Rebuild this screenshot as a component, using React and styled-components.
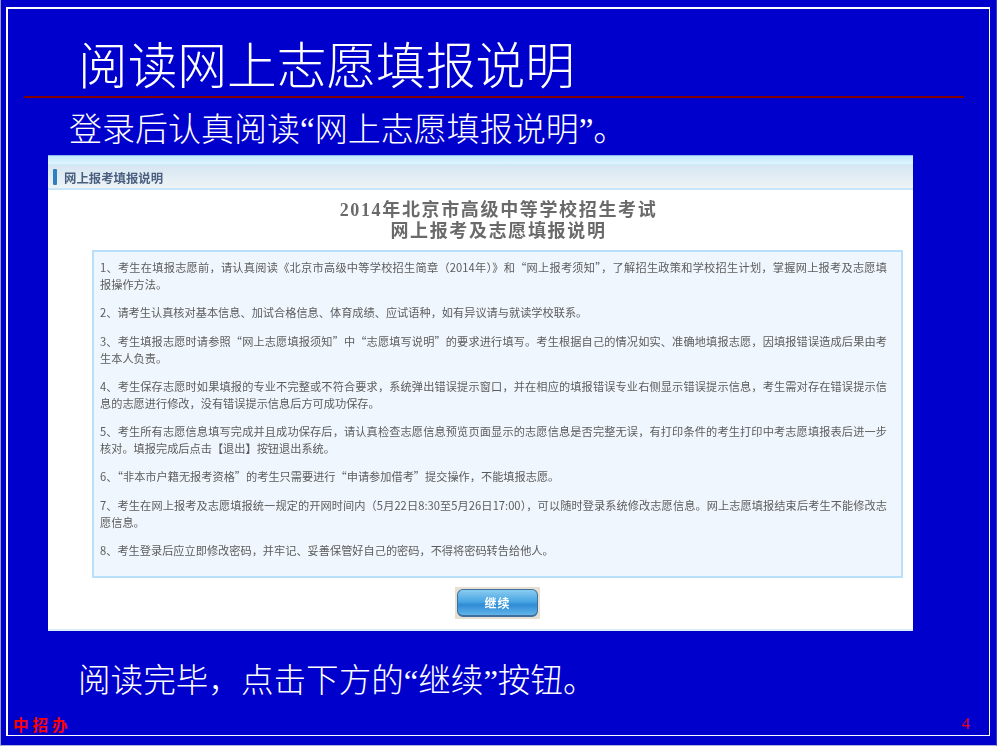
import React from "react";
import styled, { createGlobalStyle } from "styled-components";

const Global = createGlobalStyle`
  html, body { margin: 0; padding: 0; background: #0000cc; }
`;
const slideFont = `"Liberation Serif", "Noto Sans CJK SC", serif`;
const bodyFont = `"Noto Sans CJK SC", "Liberation Sans", sans-serif`;

const Slide = styled.div`
  width: 997px; height: 746px; box-sizing: border-box; overflow: hidden;
  background: #0000cc;
  border-left: 1px solid #9a9ad0;
  border-right: 1px solid #3a3ac8;
  border-bottom: 1px solid #b0b0d8;
  padding: 7px 6px 9px 5px;
  display: flex;
`;
const Frame = styled.div`
  flex: 1; box-sizing: border-box;
  border: 1px solid #fff; border-top-width: 2px; border-left-width: 2px;
  display: flex; flex-direction: column;
`;
const Title = styled.h1`
  margin: 34px 0 0 70px; font: 300 49.7px/50px ${slideFont}; color: #fff; white-space: nowrap;
`;
const Rule = styled.div`
  height: 2px; margin: 3px 25px 0 16px; background: #800000;
`;
const Lead = styled.p`
  margin: ${p => p.$top}px 0 0 ${p => p.$left}px; font: 300 ${p => p.$size}px/40px ${slideFont}; color: #fff; white-space: nowrap;
`;
const Panel = styled.section`
  margin: 5px 0 0 40px; width: 865px; height: 476px; background: #fff;
  display: flex; flex-direction: column; overflow: hidden;
  border-bottom: 2px solid #dceef8; box-sizing: border-box;
`;
const PanelStrip = styled.div`
  height: 9px; background: linear-gradient(#bfe8fb, #e2f5fd); border-top: 1px solid #8fb8f0; box-sizing: border-box;
`;
const PanelHead = styled.header`
  height: 26px; box-sizing: border-box; display: flex; align-items: center; gap: 7px; padding: 0 0 0 5px;
  background: linear-gradient(#d6e6f2, #eef4f6);
  border-top: 1px solid #c8ecfb; border-bottom: 2px solid #c8e6fa;
`;
const Marker = styled.span`
  width: 4px; height: 16px; background: #2f80c0; border-radius: 1px;
`;
const PanelLabel = styled.span`
  margin-top: 3px; font: 700 12.4px/16px ${bodyFont}; color: #4a5f80; filter: blur(0.45px); white-space: nowrap;
`;
const Heading = styled.h2`
  margin: 10px 0 0; padding-left: 36px; text-align: center; font: 700 18px/21px ${slideFont};
  letter-spacing: 1.65px; color: #6a6a6a; filter: blur(0.5px);
`;
const Notice = styled.div`
  margin: 8px 10px 0 44px; height: 328px; box-sizing: border-box;
  background: #f0f6fd; border: 2px solid #b8e0f8; padding: 7px 0 0 6px;
  display: flex; flex-direction: column; gap: 11.3px;
`;
const Para = styled.p`
  margin: 0; font: 400 11.2px/17px ${bodyFont}; color: #5c5c5c;
  filter: blur(0.5px);
`;
const FullLine = styled.span`
  display: block; width: 787px; text-align: justify; text-align-last: justify;
`;
const LastLine = styled.span`
  display: block; white-space: nowrap;
`;
const ButtonRow = styled.div`
  display: flex; justify-content: flex-start; margin: 9px 0 0 407px;
`;
const ButtonBack = styled.div`
  width: 85px; height: 32px; background: #e6dfd2; display: flex; align-items: center; justify-content: center;
`;
const Continue = styled.button`
  width: 81px; height: 28px; padding: 0; border: 1px solid #3f6f9c; border-bottom-width: 2px; border-radius: 6px;
  background: linear-gradient(#8accf0 0%, #4aa6e4 45%, #2f8cd4 60%, #62b4ea 100%);
  color: #fff; font: 700 12px/14px ${bodyFont}; letter-spacing: 1px; filter: blur(0.45px);
`;
const Footer = styled.footer`
  margin-top: auto; display: flex; justify-content: space-between; align-items: center; padding: 0 19px 1px 5px;
`;
const Office = styled.span`
  font: 700 15.5px/20px ${bodyFont}; color: #f00; letter-spacing: 4px;
`;
const PageNo = styled.span`
  font: 400 17px/20px ${slideFont}; color: #e00030;
`;

const paragraphs = [
  ["1、考生在填报志愿前，请认真阅读《北京市高级中等学校招生简章（2014年）》和“网上报考须知”，了解招生政策和学校招生计划，掌握网上报考及志愿填", "报操作方法。"],
  ["2、请考生认真核对基本信息、加试合格信息、体育成绩、应试语种，如有异议请与就读学校联系。"],
  ["3、考生填报志愿时请参照“网上志愿填报须知”中“志愿填写说明”的要求进行填写。考生根据自己的情况如实、准确地填报志愿，因填报错误造成后果由考", "生本人负责。"],
  ["4、考生保存志愿时如果填报的专业不完整或不符合要求，系统弹出错误提示窗口，并在相应的填报错误专业右侧显示错误提示信息，考生需对存在错误提示信", "息的志愿进行修改，没有错误提示信息后方可成功保存。"],
  ["5、考生所有志愿信息填写完成并且成功保存后，请认真检查志愿信息预览页面显示的志愿信息是否完整无误，有打印条件的考生打印中考志愿填报表后进一步", "核对。填报完成后点击【退出】按钮退出系统。"],
  ["6、“非本市户籍无报考资格”的考生只需要进行“申请参加借考”提交操作，不能填报志愿。"],
  ["7、考生在网上报考及志愿填报统一规定的开网时间内（5月22日8:30至5月26日17:00），可以随时登录系统修改志愿信息。网上志愿填报结束后考生不能修改志", "愿信息。"],
  ["8、考生登录后应立即修改密码，并牢记、妥善保管好自己的密码，不得将密码转告给他人。"],
];

export default function App() {
  return (
    <Slide>
      <Global />
      <Frame>
        <Title>阅读网上志愿填报说明</Title>
        <Rule />
        <Lead $top={12} $left={61} $size={33}>登录后认真阅读“网上志愿填报说明”。</Lead>
        <Panel>
          <PanelStrip />
          <PanelHead><Marker /><PanelLabel>网上报考填报说明</PanelLabel></PanelHead>
          <Heading>2014年北京市高级中等学校招生考试<br />网上报考及志愿填报说明</Heading>
          <Notice>
            {paragraphs.map((lines, i) => (
              <Para key={i}>
                {lines.length > 1
                  ? <><FullLine>{lines[0]}</FullLine><LastLine>{lines[1]}</LastLine></>
                  : <LastLine>{lines[0]}</LastLine>}
              </Para>
            ))}
          </Notice>
          <ButtonRow><ButtonBack><Continue>继续</Continue></ButtonBack></ButtonRow>
        </Panel>
        <Lead $top={30} $left={70} $size={32.6}>阅读完毕，点击下方的“继续”按钮。</Lead>
        <Footer><Office>中招办</Office><PageNo>4</PageNo></Footer>
      </Frame>
    </Slide>
  );
}
